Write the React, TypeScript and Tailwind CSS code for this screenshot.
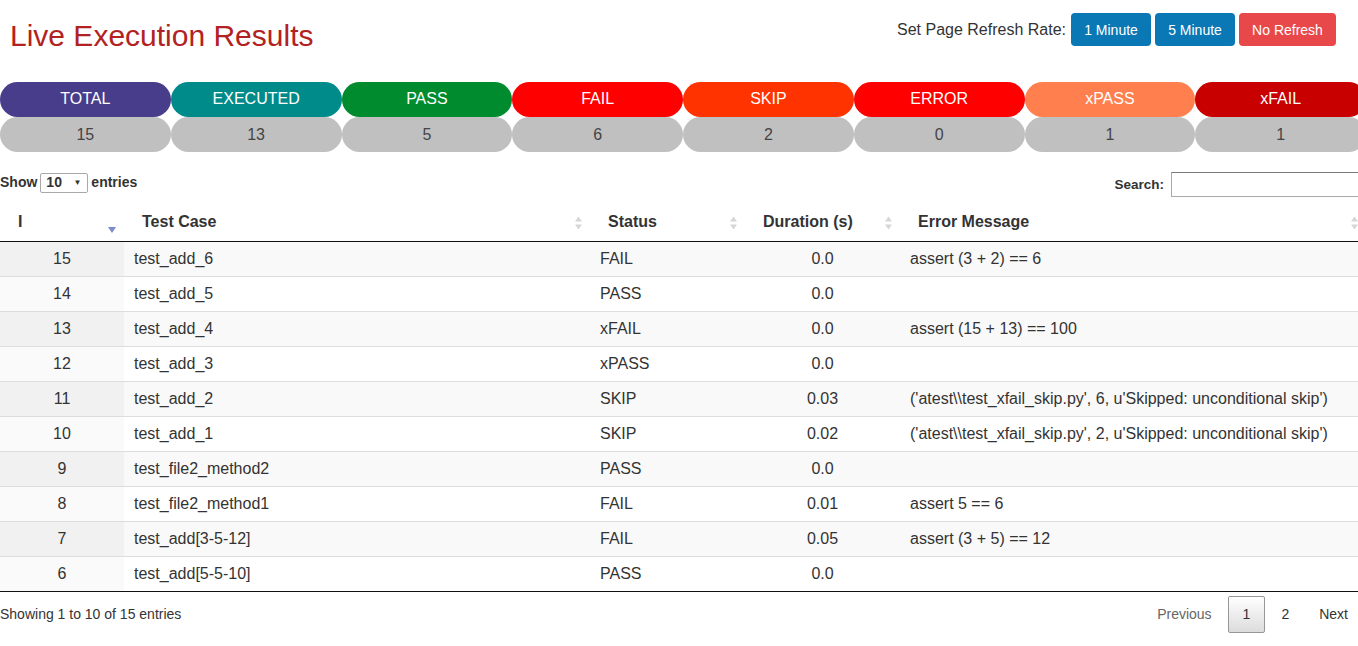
const pills = [
  { label: 'TOTAL', count: 15, bg: 'bg-[#483d8b]' },
  { label: 'EXECUTED', count: 13, bg: 'bg-[#008b8b]' },
  { label: 'PASS', count: 5, bg: 'bg-[#008c2e]' },
  { label: 'FAIL', count: 6, bg: 'bg-[#ff0000]' },
  { label: 'SKIP', count: 2, bg: 'bg-[#ff3300]' },
  { label: 'ERROR', count: 0, bg: 'bg-[#ff0000]' },
  { label: 'xPASS', count: 1, bg: 'bg-[#ff7f4f]' },
  { label: 'xFAIL', count: 1, bg: 'bg-[#c80000]' },
];

const rows = [
  { id: 15, name: 'test_add_6', status: 'FAIL', dur: '0.0', err: 'assert (3 + 2) == 6' },
  { id: 14, name: 'test_add_5', status: 'PASS', dur: '0.0', err: '' },
  { id: 13, name: 'test_add_4', status: 'xFAIL', dur: '0.0', err: 'assert (15 + 13) == 100' },
  { id: 12, name: 'test_add_3', status: 'xPASS', dur: '0.0', err: '' },
  { id: 11, name: 'test_add_2', status: 'SKIP', dur: '0.03', err: "('atest\\\\test_xfail_skip.py', 6, u'Skipped: unconditional skip')" },
  { id: 10, name: 'test_add_1', status: 'SKIP', dur: '0.02', err: "('atest\\\\test_xfail_skip.py', 2, u'Skipped: unconditional skip')" },
  { id: 9, name: 'test_file2_method2', status: 'PASS', dur: '0.0', err: '' },
  { id: 8, name: 'test_file2_method1', status: 'FAIL', dur: '0.01', err: 'assert 5 == 6' },
  { id: 7, name: 'test_add[3-5-12]', status: 'FAIL', dur: '0.05', err: 'assert (3 + 5) == 12' },
  { id: 6, name: 'test_add[5-5-10]', status: 'PASS', dur: '0.0', err: '' },
];

function SortBoth() {
  return (
    <svg width="7" height="13" viewBox="0 0 7 13" className="absolute right-[8px] top-1/2 -translate-y-1/2">
      <path d="M3.5 0 L7 5 L0 5 Z" fill="#d6d6d6" />
      <path d="M3.5 13 L7 8 L0 8 Z" fill="#d6d6d6" />
    </svg>
  );
}

function SortDesc() {
  return (
    <svg width="8" height="6" viewBox="0 0 8 6" className="absolute right-[8px] top-[22px]">
      <path d="M0 0 L8 0 L4 6 Z" fill="#7b8bd0" />
    </svg>
  );
}

export default function App() {
  return (
    <div className="w-full overflow-hidden bg-white">
      <div className="w-[1366px] text-[#333] font-['Liberation_Sans',Arial,sans-serif]">
        <div className="flex h-[82px] items-start justify-between pr-[30px]">
          <h1 className="pl-[10px] pt-[19px] text-[30px] leading-[34px] font-normal text-[#b22222]">Live Execution Results</h1>
          <div className="flex items-center gap-[4px] pt-[13px]">
            <span className="mr-[1px] text-[16px]">Set Page Refresh Rate:</span>
            <button className="h-[33px] w-[80px] rounded-[4px] bg-[#0a78b5] pt-[1px] text-[14px] text-white">1 Minute</button>
            <button className="h-[33px] w-[80px] rounded-[4px] bg-[#0a78b5] pt-[1px] text-[14px] text-white">5 Minute</button>
            <button className="h-[33px] w-[97px] rounded-[4px] bg-[#e84849] pt-[1px] text-[14px] text-white">No Refresh</button>
          </div>
        </div>

        <div className="grid grid-cols-8">
          {pills.map((p) => (
            <div key={p.label} className="flex flex-col">
              <div className={`flex h-[35px] items-center justify-center rounded-[18px] pb-[2px] text-[16px] text-white ${p.bg}`}>{p.label}</div>
              <div className="flex h-[35px] items-center justify-center rounded-[18px] bg-[#c0c0c0] text-[16px] text-[#444]">{p.count}</div>
            </div>
          ))}
        </div>

        <div className="mt-[20px] flex h-[33px] items-start justify-between">
          <div className="flex items-center gap-[3px] text-[14px] font-bold">
            <span>Show</span>
            <div className="flex h-[20px] w-[48px] items-center justify-between rounded-[2px] border border-[#a9a9a9] pl-[5px] pr-[6px] font-normal">
              <span className="text-[14px] font-bold">10</span>
              <span className="text-[8px]">▼</span>
            </div>
            <span>entries</span>
          </div>
          <div className="flex items-center gap-[7px] text-[13.5px] font-bold">
            <span className="pt-[1px]">Search:</span>
            <input className="h-[25px] w-[195px] border border-[#a9a9a9] border-t-[#7a7a7a] bg-white outline-none" />
          </div>
        </div>

        <table className="w-full border-b border-[#111] text-[16px]">
          <thead>
            <tr className="text-left font-bold">
              <th className="relative h-[36px] w-[124px] border-b border-[#111] pb-[1px] pl-[18px]">I<SortDesc /></th>
              <th className="relative w-[466px] border-b border-[#111] pb-[1px] pl-[18px]">Test Case<SortBoth /></th>
              <th className="relative w-[155px] border-b border-[#111] pb-[1px] pl-[18px]">Status<SortBoth /></th>
              <th className="relative w-[155px] border-b border-[#111] pb-[1px] pl-[18px]">Duration (s)<SortBoth /></th>
              <th className="relative border-b border-[#111] pb-[1px] pl-[18px]">Error Message<SortBoth /></th>
            </tr>
          </thead>
          <tbody>
            {rows.map((r, i) => {
              const odd = i % 2 === 0;
              const line = i === 0 ? '' : 'border-t border-[#ddd]';
              const bg = odd ? 'bg-[#f9f9f9]' : 'bg-white';
              return (
                <tr key={r.id} className="h-[35px]">
                  <td className={`${line} ${odd ? 'bg-[#f1f1f1]' : 'bg-[#fafafa]'} text-center`}>{r.id}</td>
                  <td className={`${line} ${bg} pl-[10px]`}>{r.name}</td>
                  <td className={`${line} ${bg} pl-[10px]`}>{r.status}</td>
                  <td className={`${line} ${bg} text-center`}>{r.dur}</td>
                  <td className={`${line} ${bg} pl-[10px]`}>{r.err}</td>
                </tr>
              );
            })}
          </tbody>
        </table>

        <div className="flex items-center justify-between pt-[4px] text-[14px]">
          <span>Showing 1 to 10 of 15 entries</span>
          <div className="flex items-center gap-[2px] pr-[4px]">
            <span className="px-[14px] py-[7px] text-[#666]">Previous</span>
            <span className="rounded-[2px] border border-[#979797] bg-gradient-to-b from-white to-[#dcdcdc] px-[14px] py-[7px] text-[#333]">1</span>
            <span className="px-[14px] py-[7px]">2</span>
            <span className="px-[14px] py-[7px]">Next</span>
          </div>
        </div>
      </div>
    </div>
  );
}
